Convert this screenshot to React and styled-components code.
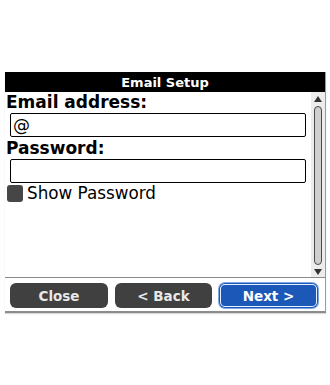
import React from 'react'
import styled, { createGlobalStyle } from 'styled-components'

const Global = createGlobalStyle`
  body {
    margin: 0;
    background: #fff;
    font-family: "DejaVu Sans", Verdana, sans-serif;
  }
`

const Screen = styled.div`
  width: 330px;
  height: 385px;
  padding-top: 72px;
  box-sizing: border-box;
`

const Dialog = styled.div`
  margin-left: 5px;
  width: 320px;
  display: flex;
  flex-direction: column;
  border-right: 1px solid #9a9a9a;
  border-bottom: 2px solid #8c8c8c;
  box-shadow: 0 1px 1px rgba(0,0,0,0.15);
`

const TitleBar = styled.div`
  height: 20px;
  background: #000;
  color: #fff;
  font-weight: bold;
  font-size: 13px;
  display: flex;
  align-items: center;
  justify-content: center;
`

const Body = styled.div`
  display: flex;
  height: 185px;
  border-bottom: 1px solid #8a8a8a;
`

const Form = styled.div`
  flex: 1;
  padding: 1px 0 0 1px;
  display: flex;
  flex-direction: column;
`

const Label = styled.div`
  font-weight: bold;
  font-size: 17px;
  line-height: 18px;
  color: #000;
`

const Field = styled.div`
  margin: 2px 0 2px 4px;
  width: 296px;
  height: 24px;
  box-sizing: border-box;
  border: 1px solid #000;
  border-radius: 2px;
  font-size: 17px;
  line-height: 22px;
  padding-left: 2px;
`

const CheckRow = styled.label`
  display: flex;
  align-items: center;
  gap: 4px;
  font-size: 16.8px;
  line-height: 17px;
`

const Box = styled.span`
  width: 16px;
  height: 17px;
  margin-left: 1px;
  border-radius: 3px;
  background: #464646;
`

const Scroll = styled.div`
  width: 14px;
  background: #ececec;
  display: flex;
  flex-direction: column;
  align-items: center;
  padding: 4px 0 2px;
  box-sizing: border-box;
`

const Arrow = styled.div`
  width: 0;
  height: 0;
  border-left: 4px solid transparent;
  border-right: 4px solid transparent;
  ${p => p.down ? 'border-top: 6px solid #333;' : 'border-bottom: 6px solid #333;'}
`

const Thumb = styled.div`
  flex: 1;
  width: 8px;
  margin: 4px 0;
  box-sizing: border-box;
  border: 1px solid #4a4a4a;
  border-radius: 5px;
  background: #cfcfcf;
`

const Buttons = styled.div`
  display: flex;
  gap: 7px;
  padding: 5px 6px 3px 5px;
`

const Button = styled.button`
  width: ${p => p.w}px;
  height: 25px;
  border-radius: 6px;
  border: none;
  font-family: "DejaVu Sans", Verdana, sans-serif;
  font-weight: bold;
  font-size: 13.5px;
  color: #e8e8e8;
  background: #404040;
  ${p => p.primary && `
    background: #1c58b8;
    color: #fff;
    box-shadow: inset 0 0 0 1px #1c58b8, inset 0 0 0 2px #e8f0ff, 0 0 0 1px #7fa8e4;
  `}
`

export default function App() {
  return (
    <Screen>
      <Global />
      <Dialog>
        <TitleBar>Email Setup</TitleBar>
        <Body>
          <Form>
            <Label>Email address:</Label>
            <Field>@</Field>
            <Label>Password:</Label>
            <Field />
            <CheckRow><Box />Show Password</CheckRow>
          </Form>
          <Scroll>
            <Arrow />
            <Thumb />
            <Arrow down />
          </Scroll>
        </Body>
        <Buttons>
          <Button w={98}>Close</Button>
          <Button w={97}>&lt; Back</Button>
          <Button w={99} primary>Next &gt;</Button>
        </Buttons>
      </Dialog>
    </Screen>
  )
}
